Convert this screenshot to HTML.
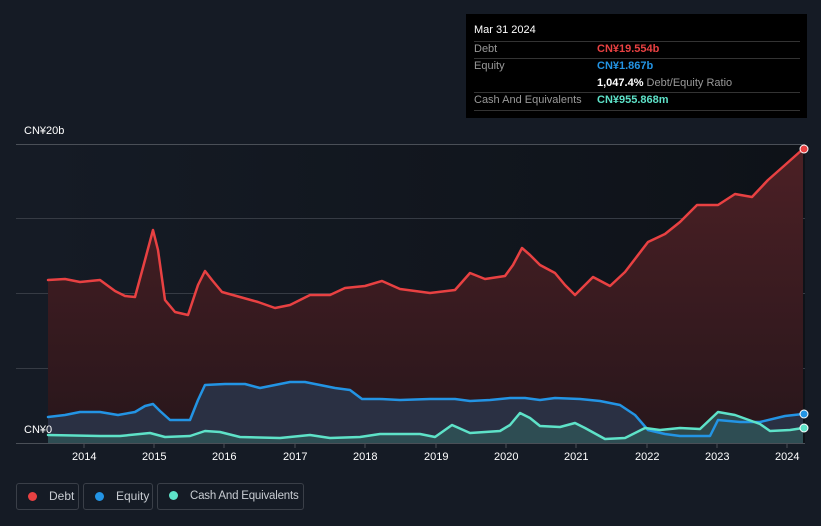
<!DOCTYPE html>
<html><head><meta charset="utf-8"><style>
html,body{margin:0;background:#151b25;width:821px;height:526px;overflow:hidden;font-family:"Liberation Sans",sans-serif;position:relative}
.t{position:absolute;font-size:11px;color:#fff}
.tip{position:absolute;left:466px;top:14px;width:341px;height:104px;background:#000}
.tip div{position:absolute;font-size:11px;white-space:nowrap}
.ln{position:absolute;left:8px;width:326px;height:1px;background:#333}
.leg{position:absolute;top:483px;height:27px;border:1px solid #3a3f48;border-radius:3px;box-sizing:border-box;font-size:12px;color:#c8ccd2;line-height:25px;white-space:nowrap;overflow:hidden}
.leg i{display:inline-block;width:9px;height:9px;border-radius:50%;margin:0 12px 0 11px;vertical-align:-1px}
</style></head><body>
<svg width="821" height="526" style="position:absolute;left:0;top:0">
<defs>
<linearGradient id="bg" x1="0" x2="1"><stop offset="0" stop-color="#151b25"/><stop offset="1" stop-color="#0e1218"/></linearGradient>
<linearGradient id="dr" x1="0" y1="0" x2="0" y2="1"><stop offset="0" stop-color="#4c2025"/><stop offset="1" stop-color="#27161b"/></linearGradient>
</defs>
<rect x="48" y="144" width="757" height="299" fill="url(#bg)"/>
<g stroke="#363b44" stroke-width="1">
<line x1="16" x2="805" y1="144.5" y2="144.5" stroke="#4a4f57"/><line x1="16" x2="805" y1="218.5" y2="218.5"/><line x1="16" x2="805" y1="293.5" y2="293.5"/><line x1="16" x2="805" y1="368.5" y2="368.5"/><line x1="16" x2="805" y1="443.5" y2="443.5" stroke="#4a4f57"/>
</g>
<g stroke="#4a4f57"><line x1="84" x2="84" y1="443" y2="448"/><line x1="154" x2="154" y1="443" y2="448"/><line x1="224" x2="224" y1="443" y2="448"/><line x1="295" x2="295" y1="443" y2="448"/><line x1="365" x2="365" y1="443" y2="448"/><line x1="436" x2="436" y1="443" y2="448"/><line x1="506" x2="506" y1="443" y2="448"/><line x1="576" x2="576" y1="443" y2="448"/><line x1="647" x2="647" y1="443" y2="448"/><line x1="717" x2="717" y1="443" y2="448"/><line x1="787" x2="787" y1="443" y2="448"/></g>
<path d="M48,280 L65,279 80,282 100,280 115,291 125,296 135,297 145,260 153,230 158,250 165,300 175,312 188,315 198,285 205,271 212,280 222,292 240,297 258,302 275,308 290,305 310,295 330,295 345,288 365,286 382,281 400,289 430,293 455,290 470,273 485,279 505,276 513,265 522,248 530,255 540,265 555,273 565,285 575,295 583,287 593,277 610,286 625,272 648,242 665,234 680,222 697,205 718,205 735,194 752,197 768,180 785,165 803,149 L803,443 L48,443Z" fill="url(#dr)"/>
<path d="M48,417 L65,415 80,412 100,412 118,415 135,412 145,406 153,404 160,411 170,420 190,420 198,400 205,385 225,384 245,384 260,388 275,385 290,382 305,382 320,385 335,388 350,390 362,399 380,399 400,400 430,399 455,399 470,401 490,400 510,398 525,398 540,400 555,398 580,399 600,401 620,405 635,415 648,430 665,434 680,436 710,436 718,420 740,422 760,422 785,416 803,414 L803,443 L48,443Z" fill="#2a354a" opacity="0.85"/>
<path d="M48,435 L100,436 120,436 150,433 165,437 190,436 205,431 220,432 240,437 280,438 310,435 330,438 360,437 380,434 420,434 435,437 452,425 470,433 500,431 510,425 520,413 530,418 540,426 560,427 575,423 585,428 605,439 625,438 645,428 660,430 680,428 700,429 718,412 735,415 760,424 770,431 790,430 803,428 L803,443 L48,443Z" fill="#2f5557" opacity="0.8"/>
<g fill="none" stroke-width="2.5" stroke-linejoin="round" stroke-linecap="round">
<path d="M48,280 L65,279 80,282 100,280 115,291 125,296 135,297 145,260 153,230 158,250 165,300 175,312 188,315 198,285 205,271 212,280 222,292 240,297 258,302 275,308 290,305 310,295 330,295 345,288 365,286 382,281 400,289 430,293 455,290 470,273 485,279 505,276 513,265 522,248 530,255 540,265 555,273 565,285 575,295 583,287 593,277 610,286 625,272 648,242 665,234 680,222 697,205 718,205 735,194 752,197 768,180 785,165 803,149" stroke="#e84142"/>
<path d="M48,417 L65,415 80,412 100,412 118,415 135,412 145,406 153,404 160,411 170,420 190,420 198,400 205,385 225,384 245,384 260,388 275,385 290,382 305,382 320,385 335,388 350,390 362,399 380,399 400,400 430,399 455,399 470,401 490,400 510,398 525,398 540,400 555,398 580,399 600,401 620,405 635,415 648,430 665,434 680,436 710,436 718,420 740,422 760,422 785,416 803,414" stroke="#2394e4"/>
<path d="M48,435 L100,436 120,436 150,433 165,437 190,436 205,431 220,432 240,437 280,438 310,435 330,438 360,437 380,434 420,434 435,437 452,425 470,433 500,431 510,425 520,413 530,418 540,426 560,427 575,423 585,428 605,439 625,438 645,428 660,430 680,428 700,429 718,412 735,415 760,424 770,431 790,430 803,428" stroke="#5ee2c8"/>
</g>
<circle cx="804" cy="149" r="4" fill="#e84142" stroke="#fff" stroke-width="1"/>
<circle cx="804" cy="414" r="4" fill="#2394e4" stroke="#fff" stroke-width="1"/>
<circle cx="804" cy="428" r="4" fill="#5ee2c8" stroke="#fff" stroke-width="1"/>
</svg>
<div class="t" style="left:24px;top:125px">CN¥20b</div>
<div class="t" style="left:24px;top:424px">CN¥0</div>
<div class="t" style="left:72px;top:451px">2014</div><div class="t" style="left:142px;top:451px">2015</div><div class="t" style="left:212px;top:451px">2016</div><div class="t" style="left:283px;top:451px">2017</div><div class="t" style="left:353px;top:451px">2018</div><div class="t" style="left:424px;top:451px">2019</div><div class="t" style="left:494px;top:451px">2020</div><div class="t" style="left:564px;top:451px">2021</div><div class="t" style="left:635px;top:451px">2022</div><div class="t" style="left:705px;top:451px">2023</div><div class="t" style="left:775px;top:451px">2024</div>
<div class="tip">
<div style="left:8px;top:10px;color:#fff">Mar 31 2024</div>
<div class="ln" style="top:27px"></div>
<div style="left:8px;top:29px;color:#999">Debt</div><div style="left:131px;top:29px;color:#e84142;font-weight:bold">CN¥19.554b</div>
<div class="ln" style="top:44px"></div>
<div style="left:8px;top:46px;color:#999">Equity</div><div style="left:131px;top:46px;color:#2394e4;font-weight:bold">CN¥1.867b</div>
<div style="left:131px;top:63px;color:#fff"><b>1,047.4%</b> <span style="color:#999">Debt/Equity Ratio</span></div>
<div class="ln" style="top:78px"></div>
<div style="left:8px;top:80px;color:#999">Cash And Equivalents</div><div style="left:131px;top:80px;color:#5ee2c8;font-weight:bold">CN¥955.868m</div>
<div class="ln" style="top:96px"></div>
</div>
<div class="leg" style="left:16px;width:63px"><i style="background:#e84142"></i>Debt</div>
<div class="leg" style="left:83px;width:70px"><i style="background:#2394e4"></i>Equity</div>
<div class="leg" style="left:157px;width:147px;font-size:11.5px;letter-spacing:-0.2px"><i style="background:#5ee2c8"></i>Cash And Equivalents</div>
</body></html>
